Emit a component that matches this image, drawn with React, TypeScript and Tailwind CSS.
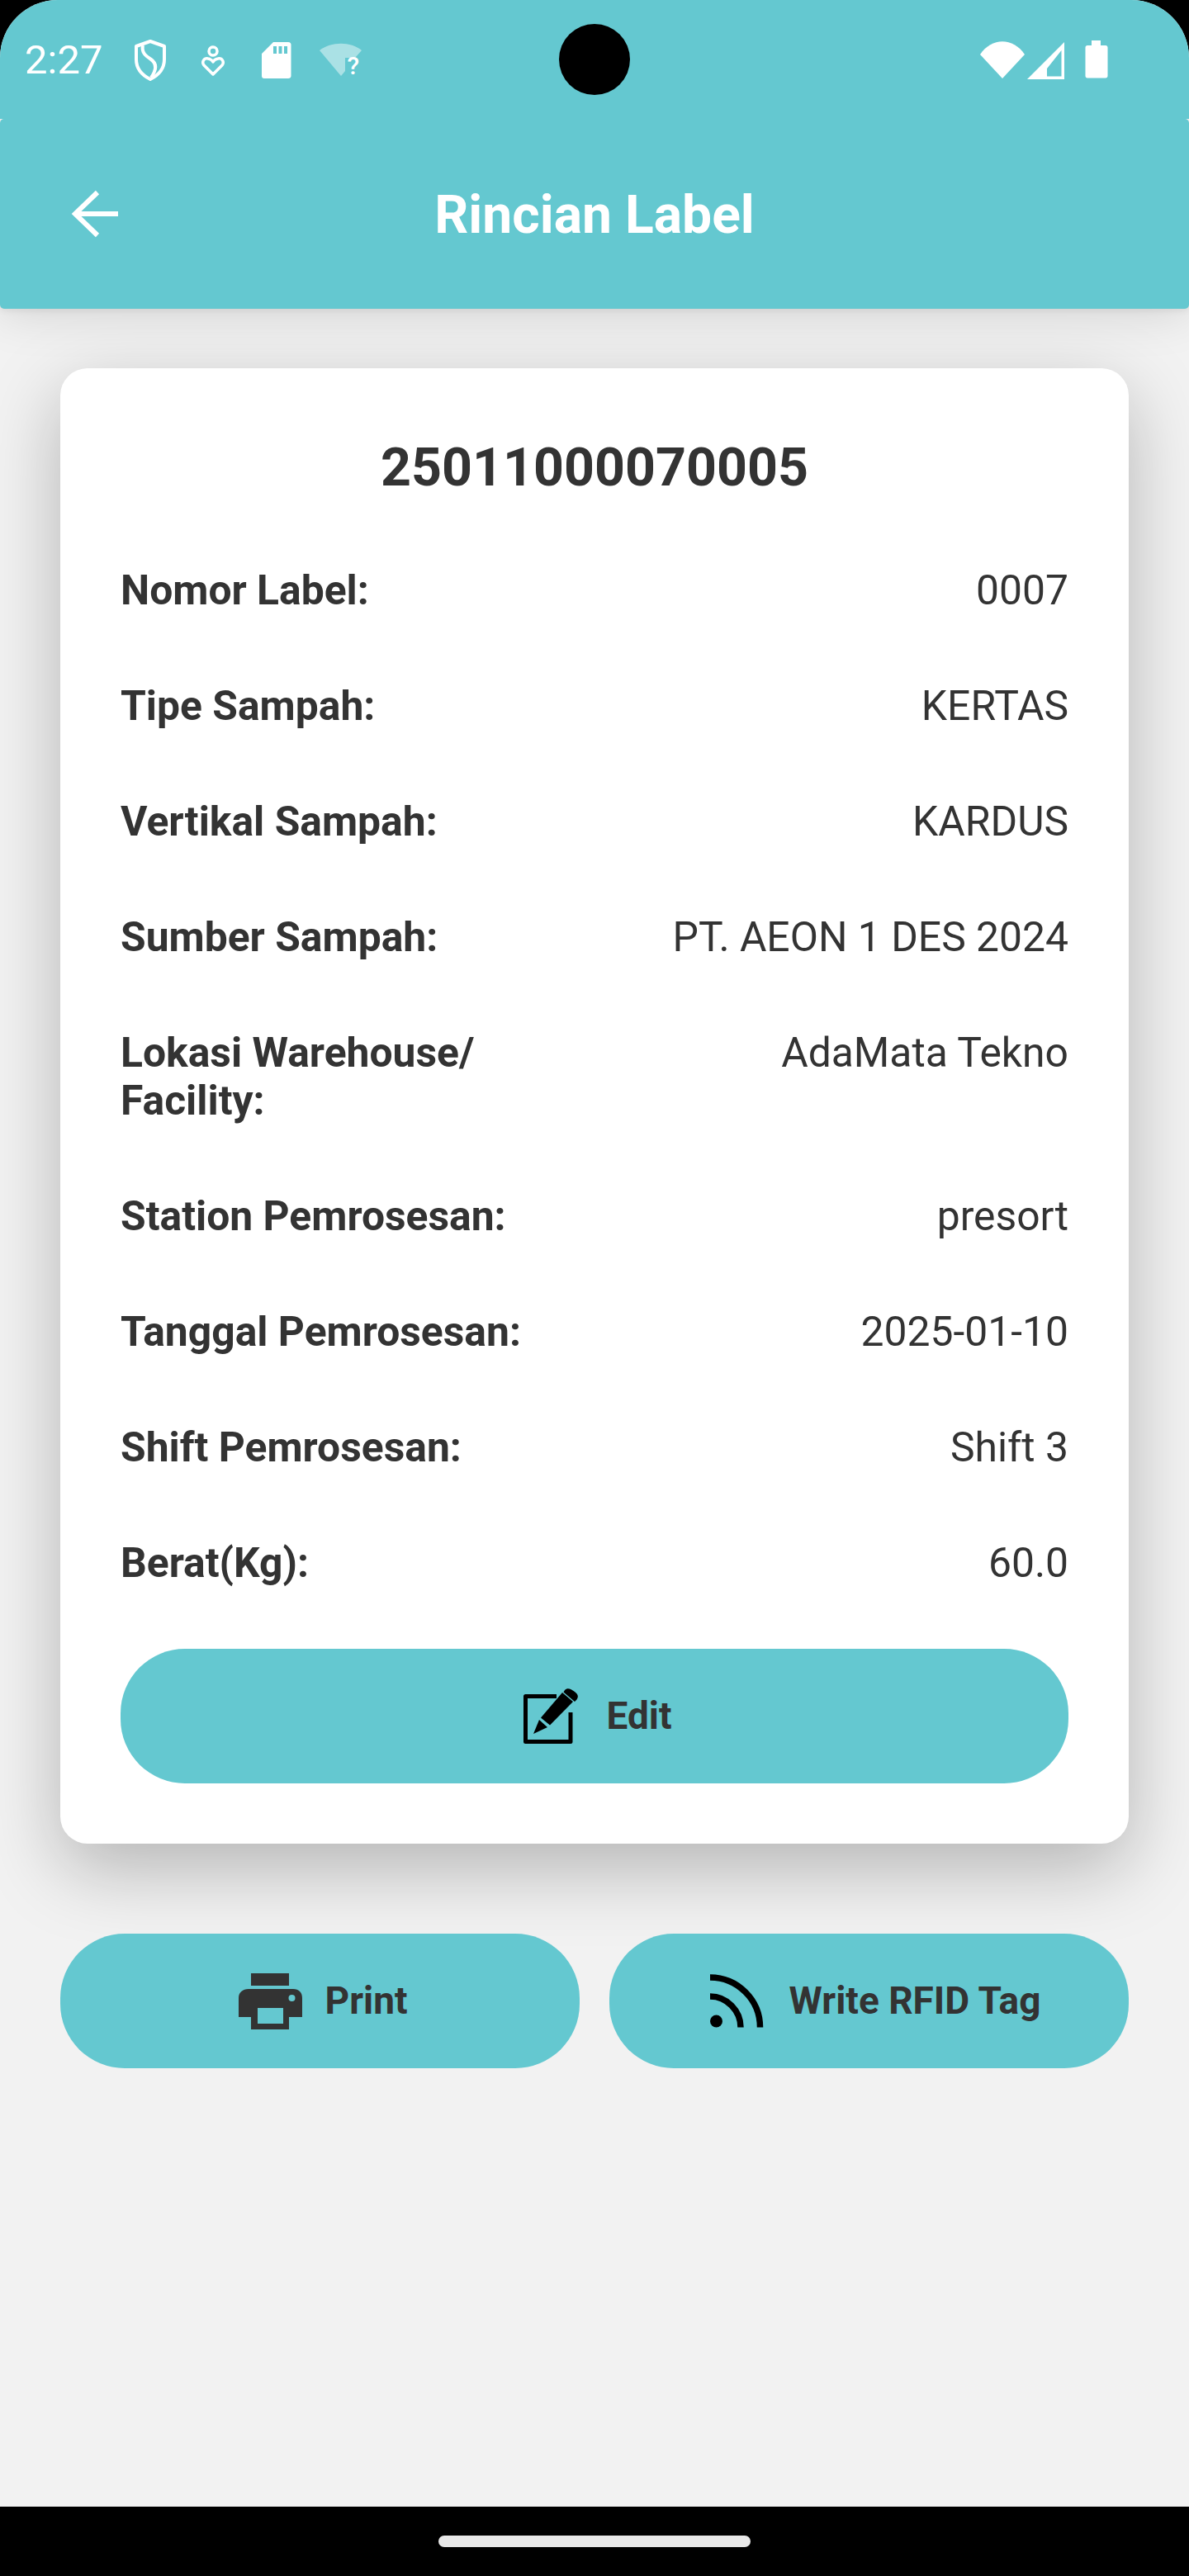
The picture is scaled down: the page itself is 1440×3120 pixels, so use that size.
import React from "react";

const rows: { label: string; value: string }[] = [
  { label: "Nomor Label:", value: "0007" },
  { label: "Tipe Sampah:", value: "KERTAS" },
  { label: "Vertikal Sampah:", value: "KARDUS" },
  { label: "Sumber Sampah:", value: "PT. AEON 1 DES 2024" },
  { label: "Lokasi Warehouse/ Facility:", value: "AdaMata Tekno" },
  { label: "Station Pemrosesan:", value: "presort" },
  { label: "Tanggal Pemrosesan:", value: "2025-01-10" },
  { label: "Shift Pemrosesan:", value: "Shift 3" },
  { label: "Berat(Kg):", value: "60.0" },
];

function ShieldIcon() {
  return (
    <svg width="40" height="50" viewBox="0 0 40 50" fill="none" stroke="white" strokeWidth="4">
      <path d="M20 2 L37 8 V24 C37 35 30 43 20 48 C10 43 3 35 3 24 V8 Z" strokeLinejoin="round" />
      <path d="M11 7 C9 16 15 20 21 24 C28 29 28 36 21 46" />
    </svg>
  );
}

function PersonHeartIcon() {
  return (
    <svg width="28" height="38" viewBox="0 0 28 38" fill="none" stroke="white" strokeWidth="3.5">
      <circle cx="14" cy="7" r="5" />
      <path d="M14 35 L3 24 C0 20 3 15 8 16 C11 16.500 13 18 14 20 C15 18 17 16.500 20 16 C25 15 28 20 25 24 Z" strokeLinejoin="round" />
    </svg>
  );
}

function SdCardIcon() {
  return (
    <svg width="36" height="44" viewBox="0 0 36 44">
      <path
        fillRule="evenodd"
        fill="white"
        d="M14 0 H32 C34.500 0 35.500 1.500 35.500 3 V41 C35.500 43 34 44 32 44 H3 C1 44 0 43 0 41 V14 Z M14 5 V14 H18 V5 Z M20.500 5 V14 H24.500 V5 Z M27 5 V14 H31 V5 Z"
      />
    </svg>
  );
}

function WifiUnknownIcon() {
  return (
    <div className="relative h-[44px] w-[52px]">
      <svg width="52" height="44" viewBox="0 0 52 44">
        <path d="M0 9 C14 -2 38 -2 51 9 L43 18 H31 V34 L26 40 Z" fill="white" opacity="0.45" />
      </svg>
      <span className="absolute left-[33px] top-[13px] text-[30px] font-medium leading-[30px] text-white">?</span>
    </div>
  );
}

function WifiIcon() {
  return (
    <svg width="54" height="45" viewBox="0 0 54 45">
      <path d="M0 16 C14 -5 40 -5 54 16 L27 45 Z" fill="white" />
    </svg>
  );
}

function SignalIcon() {
  return (
    <svg width="45" height="45" viewBox="0 0 45 45">
      <path fillRule="evenodd" fill="white" d="M45 0 V45 H0 Z M41.500 10 L24 32 V41.500 H41.500 Z" />
    </svg>
  );
}

function BatteryIcon() {
  return (
    <svg width="28" height="46" viewBox="0 0 28 46">
      <path fill="white" d="M8 0 H19 V6 H25 C26.500 6 27.500 7 27.500 8.500 V43 C27.500 44.500 26.500 45.500 25 45.500 H3 C1.500 45.500 0.500 44.500 0.500 43 V8.500 C0.500 7 1.500 6 3 6 H8 Z" />
    </svg>
  );
}

function EditIcon() {
  return (
    <svg width="67" height="67" viewBox="0 0 67 67" className="shrink-0">
      {/* box outline, broken where the pencil crosses it */}
      <path d="M40 9.500 H2.500 V64.500 H57 V29" fill="none" stroke="black" strokeWidth="5" strokeLinejoin="round" />
      <path d="M12 55 L19 38 L29 47 Z" fill="black" />
      <path d="M21 35.500 L47 5 L60 16 L32 44.500 Z" fill="black" />
      <path d="M50 2 C53 -1 57 0 62 4 C66 7 67 10 64.500 13.500 L62 16 L48.500 4.500 Z" fill="black" />
    </svg>
  );
}

function PrinterIcon() {
  return (
    <svg width="78" height="68" viewBox="0 0 78 68" className="shrink-0">
      <path fill="#333333" d="M15 0 H61 V15 H15 Z" />
      <path
        fill="#333333"
        fillRule="evenodd"
        d="M12 19 H66 C73 19 77 23 77 30 V53 H61 V68 H15 V53 H0 V30 C0 23 5 19 12 19 Z M23 42 V61 H54 V42 Z M64.500 26 A4 4 0 1 0 64.501 34 A4 4 0 1 0 64.500 26 Z"
      />
    </svg>
  );
}

function RssIcon() {
  return (
    <svg width="65" height="65" viewBox="0 0 65 65" fill="none" className="shrink-0">
      <circle cx="7.500" cy="57" r="7.500" fill="black" />
      <path d="M0 27 C20 27 37 44 37 64.500" stroke="black" strokeWidth="7.500" />
      <path d="M0 4 C33 4 60.500 31 60.500 64.500" stroke="black" strokeWidth="7.500" />
    </svg>
  );
}

export default function App() {
  return (
    <div className="flex h-[3120px] flex-col overflow-hidden bg-black font-['Roboto',sans-serif]">
      <div className="flex flex-1 flex-col rounded-t-[70px] bg-[#f2f2f2]">
        {/* status bar */}
        <div className="relative z-10 flex h-[144px] items-start justify-between rounded-t-[70px] bg-[#64c8d0] pl-[30px] pr-[98px] pt-[48px]">
          <div className="flex items-start">
            <span className="text-[49px] leading-[50px] text-white">2:27</span>
            <div className="ml-[38px]">
              <ShieldIcon />
            </div>
            <div className="ml-[42px] mt-[7px]">
              <PersonHeartIcon />
            </div>
            <div className="ml-[45px] mt-[3px]">
              <SdCardIcon />
            </div>
            <div className="ml-[34px] mt-[4px]">
              <WifiUnknownIcon />
            </div>
          </div>
          <div className="flex items-start">
            <div className="mt-[2px]">
              <WifiIcon />
            </div>
            <div className="ml-[3px] mt-[3px]">
              <SignalIcon />
            </div>
            <div className="ml-[25px] mt-[1px]">
              <BatteryIcon />
            </div>
          </div>
          <div className="absolute left-[677px] top-[29px] h-[86px] w-[86px] rounded-full bg-black" />
        </div>

        {/* app bar */}
        <header className="relative flex h-[230px] items-center justify-center rounded-[5px] bg-[#64c8d0] pt-[2px] shadow-[0_2px_8px_rgba(0,0,0,0.07),0_8px_56px_rgba(0,0,0,0.12)]">
          <svg width="60" height="58" viewBox="0 0 60 58" fill="none" className="absolute left-[85px] top-[86px]" stroke="white" strokeWidth="6">
            <path d="M58 29 H7" />
            <path d="M33 3 L6 29 L33 55" />
          </svg>
          <h1 className="text-[64.200px] font-bold leading-[74px] text-white">Rincian Label</h1>
        </header>

        <main className="flex flex-col px-[73px] pt-[72px]">
          <section className="rounded-[33px] bg-white px-[73px] pb-[73px] pt-[83px] shadow-[0_30px_90px_rgba(0,0,0,0.26)]">
            <h2 className="mb-[83px] text-center text-[64.500px] font-bold leading-[74px] text-[#333333]">25011000070005</h2>
            <dl className="flex flex-col gap-[82px]">
              {rows.map((row) => (
                <div key={row.label} className="flex items-start justify-between text-[49.800px] leading-[58px] text-[#333333]">
                  <dt className="w-1/2 font-bold">{row.label}</dt>
                  <dd className="w-1/2 text-right">{row.value}</dd>
                </div>
              ))}
            </dl>
            <button className="mt-[75px] flex h-[163px] w-full items-center justify-center gap-[33px] rounded-[78px] bg-[#64c8d0] pl-[8px] text-[46px] font-bold text-[#333333]">
              <EditIcon />
              Edit
            </button>
          </section>

          <div className="mt-[109px] grid grid-cols-2 gap-[36px]">
            <button className="flex h-[163px] items-center justify-center gap-[26px] rounded-[78px] bg-[#64c8d0] pl-[8px] text-[46px] font-bold text-[#333333]">
              <PrinterIcon />
              Print
            </button>
            <button className="flex h-[163px] items-center justify-center gap-[31px] rounded-[78px] bg-[#64c8d0] pl-[15px] text-[46px] font-bold text-[#333333]">
              <RssIcon />
              Write RFID Tag
            </button>
          </div>
        </main>
      </div>

      {/* system navigation bar */}
      <div className="flex h-[84px] shrink-0 justify-center bg-black pt-[35px]">
        <div className="h-[14px] w-[378px] rounded-full bg-[#e8e8e8]" />
      </div>
    </div>
  );
}
